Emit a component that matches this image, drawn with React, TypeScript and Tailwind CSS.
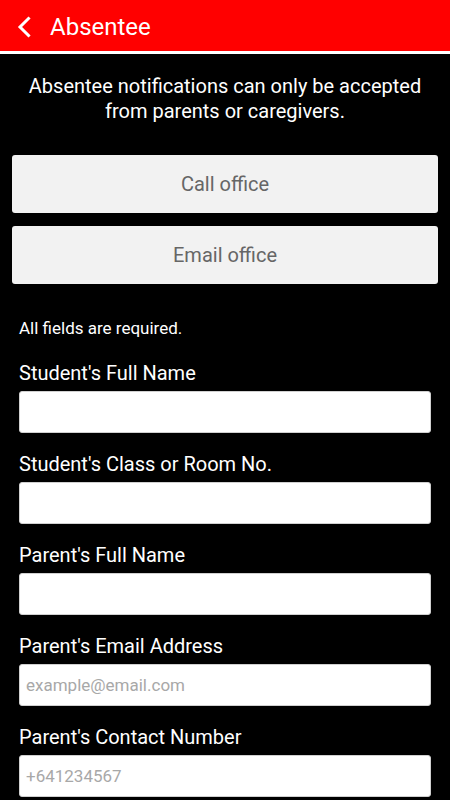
import { useState } from 'react';

const fields = [
  { label: "Student's Full Name", placeholder: '' },
  { label: "Student's Class or Room No.", placeholder: '' },
  { label: "Parent's Full Name", placeholder: '' },
  { label: "Parent's Email Address", placeholder: 'example@email.com' },
  { label: "Parent's Contact Number", placeholder: '+641234567' },
];

export default function App() {
  const [values, setValues] = useState<string[]>(fields.map(() => ''));

  return (
    <div className="min-h-[800px] bg-black font-['Roboto','Liberation_Sans',sans-serif] text-white">
      <header className="flex h-[54px] items-center border-b-[3px] border-white bg-[#ff0000] pt-[3px]">
        <button className="ml-[15px] flex h-[24px] w-[18px] items-center justify-center">
          <svg width="16" height="22" viewBox="0 0 16 22" fill="none">
            <path d="M12.5 2.5 L4 11 L12.5 19.5" stroke="white" strokeWidth="3" strokeLinecap="square" />
          </svg>
        </button>
        <h1 className="ml-[17px] text-[24px] leading-none">Absentee</h1>
      </header>

      <p className="px-5 pt-[20px] text-center text-[20px] leading-[25px]">
        Absentee notifications can only be accepted from parents or caregivers.
      </p>

      <div className="mx-3 mt-[31px] flex flex-col gap-[13px]">
        <button className="h-[58px] rounded-[3px] bg-[#f2f2f2] text-[20px] text-[#666666]">Call office</button>
        <button className="h-[58px] rounded-[3px] bg-[#f2f2f2] text-[20px] text-[#666666]">Email office</button>
      </div>

      <div className="mx-[19px] mt-[34px]">
        <p className="text-[17px] leading-[20px]">All fields are required.</p>
        <div className="mt-[23px] flex flex-col gap-[19px]">
          {fields.map((f, i) => (
            <label key={f.label} className="flex flex-col gap-[6px]">
              <span className="text-[20px] leading-[24px]">{f.label}</span>
              <input
                value={values[i]}
                placeholder={f.placeholder}
                onChange={(e) => {
                  const next = [...values];
                  next[i] = e.target.value;
                  setValues(next);
                }}
                className="h-[42px] w-full rounded-[3px] border border-[#d0d0d0] bg-white px-[6px] text-[17px] text-black outline-none placeholder:text-[#a8a8a8]"
              />
            </label>
          ))}
        </div>
      </div>
    </div>
  );
}
